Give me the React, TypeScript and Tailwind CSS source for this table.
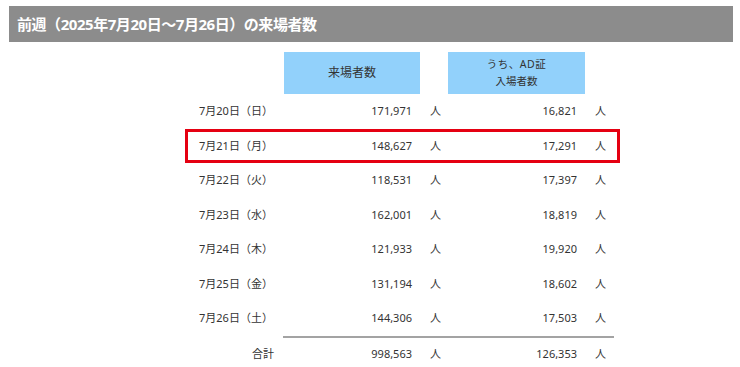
import React from "react";

type Row = { date: string; visitors: string; ad: string; highlight?: boolean };

const rows: Row[] = [
  { date: "7月20日（日）", visitors: "171,971", ad: "16,821" },
  { date: "7月21日（月）", visitors: "148,627", ad: "17,291", highlight: true },
  { date: "7月22日（火）", visitors: "118,531", ad: "17,397" },
  { date: "7月23日（水）", visitors: "162,001", ad: "18,819" },
  { date: "7月24日（木）", visitors: "121,933", ad: "19,920" },
  { date: "7月25日（金）", visitors: "131,194", ad: "18,602" },
  { date: "7月26日（土）", visitors: "144,306", ad: "17,503" },
];

const cols = "grid grid-cols-[99px_136px_28px_137px_35px]";

export default function App() {
  return (
    <div className="w-[740px] h-[367px] bg-white text-[#333] font-['Noto_Sans','Noto_Sans_CJK_JP',sans-serif] overflow-hidden">
      {/* Title bar */}
      <div className="ml-[9px] mr-[7px] mt-[6px] h-[36px] bg-[#8c8c8c] flex items-center pl-[8px]">
        <h1 className="text-white text-[15px] font-bold tracking-[-0.45px]">
          前週（2025年7月20日～7月26日）の来場者数
        </h1>
      </div>

      <div className="ml-[185px] w-[435px] mt-[10px] text-[11px]">
        {/* Column headers */}
        <div className={`${cols} h-[42px]`}>
          <div />
          <div className="bg-[#92d1fb] flex items-center justify-center text-[12px]">来場者数</div>
          <div />
          <div className="bg-[#92d1fb] flex flex-col items-center justify-center text-[10.5px] leading-[17px]">
            <span className="tracking-[0.5px]">うち、AD証</span>
            <span>入場者数</span>
          </div>
          <div />
        </div>

        {/* Daily rows */}
        {rows.map((r) => (
          <div
            key={r.date}
            className={`${cols} h-[34.5px] items-center ${r.highlight ? "ring-[3px] ring-inset ring-[#e50012]" : ""}`}
          >
            <div className="pl-[14px]">{r.date}</div>
            <div className="text-right pr-[8px]">{r.visitors}</div>
            <div className="pl-[10px]">人</div>
            <div className="text-right pr-[8px]">{r.ad}</div>
            <div className="pl-[10px]">人</div>
          </div>
        ))}

        {/* Total */}
        <div className="ml-[98px] mr-[6px] h-[2px] bg-[#a3a3a3]" />
        <div className={`${cols} h-[32.5px] items-center`}>
          <div className="text-right pr-[10px]">合計</div>
          <div className="text-right pr-[8px]">998,563</div>
          <div className="pl-[10px]">人</div>
          <div className="text-right pr-[8px]">126,353</div>
          <div className="pl-[10px]">人</div>
        </div>
      </div>
    </div>
  );
}
